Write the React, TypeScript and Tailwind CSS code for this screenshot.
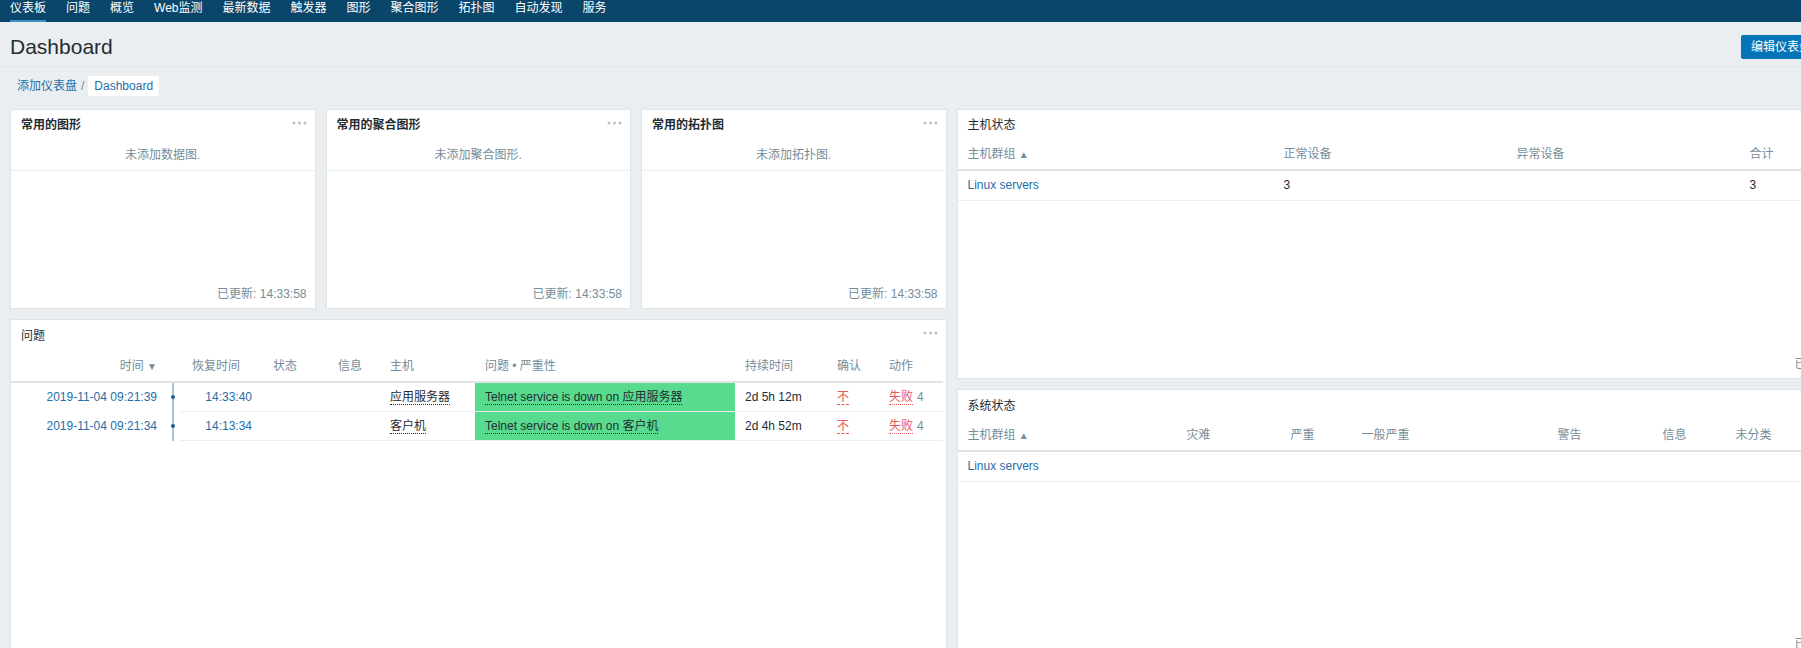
import React from "react";

const NAV = ["仪表板", "问题", "概览", "Web监测", "最新数据", "触发器", "图形", "聚合图形", "拓扑图", "自动发现", "服务"];

function Dots() {
  return (
    <svg width="15" height="4" viewBox="0 0 15 4" className="block">
      <circle cx="2" cy="2" r="1.5" fill="#b7c2c9" />
      <circle cx="7.5" cy="2" r="1.5" fill="#b7c2c9" />
      <circle cx="13" cy="2" r="1.5" fill="#b7c2c9" />
    </svg>
  );
}

function GraphWidget({ title, empty, pos }: { title: string; empty: string; pos: string }) {
  return (
    <div className={`${pos} bg-white border border-[#dfe4e7] flex flex-col`}>
      <div className="h-[30px] flex items-center justify-between pl-[10px] pr-[8px]">
        <span className="font-bold text-[#1f2c33]">{title}</span>
        <span className="-mt-[5px]"><Dots /></span>
      </div>
      <div className="h-[31px] leading-[30px] text-center text-[#768d99] border-b border-[#ebeef0]">{empty}</div>
      <div className="flex-1" />
      <div className="text-right pr-[8px] pb-[7px] leading-[14px] text-[#768d99]">已更新: 14:33:58</div>
    </div>
  );
}

const LINK = "text-[#1f6ea8]";

const problems = [
  { date: "2019-11-04 09:21:39", rec: "14:33:40", host: "应用服务器", prob: "Telnet service is down on 应用服务器", dur: "2d 5h 12m" },
  { date: "2019-11-04 09:21:34", rec: "14:13:34", host: "客户机", prob: "Telnet service is down on 客户机", dur: "2d 4h 52m" },
];

function ProblemsWidget() {
  return (
    <div className="col-start-1 col-span-6 row-start-4 row-span-5 bg-white border border-[#dfe4e7] flex flex-col">
      <div className="h-[31px] flex items-center justify-between pl-[10px] pr-[8px]">
        <span className="text-[#1f2c33]">问题</span>
        <span className="-mt-[5px]"><Dots /></span>
      </div>
      <div className="flex h-[32px] leading-[30px] text-[#768d99] border-b-2 border-[#dfe4e7] mr-[3px]">
        <div className="w-[149px] text-right pr-[3px]">时间 <span className="text-[10px]">▼</span></div>
        <div className="w-[32px]" />
        <div className="w-[81px]">恢复时间</div>
        <div className="w-[65px]">状态</div>
        <div className="w-[52px]">信息</div>
        <div className="w-[95px]">主机</div>
        <div className="w-[260px]">问题 • 严重性</div>
        <div className="w-[92px]">持续时间</div>
        <div className="w-[52px]">确认</div>
        <div>动作</div>
      </div>
      {problems.map((p) => (
        <div key={p.date} className="flex h-[29px]">
          <div className={`w-[149px] text-right pr-[3px] leading-[28px] ${LINK}`}>{p.date}</div>
          <div className="w-[20px] relative">
            <div className="absolute left-[12px] top-0 bottom-0 w-[2px] bg-[#a9c5d8]" />
            <div className="absolute left-[11px] top-[12px] w-[4px] h-[4px] rounded-full bg-[#1f5f8f]" />
          </div>
          <div className="flex-1 flex border-b border-[#ebeef0] mr-[3px]">
            <div className={`w-[82px] text-right pr-[10px] leading-[28px] ${LINK}`}>{p.rec}</div>
            <div className="w-[128px]" />
            <div className="w-[85px] flex items-center">
              <span className="leading-[14px] text-[#1f2c33] border-b border-dotted border-[#1f2c33]">{p.host}</span>
            </div>
            <div className="w-[260px] bg-[#59db8f] flex items-center pl-[10px]">
              <span className="leading-[14px] text-[#1f2c33] border-b border-dotted border-[#1f2c33]">{p.prob}</span>
            </div>
            <div className="w-[102px] pl-[10px] leading-[28px] text-[#1f2c33]">{p.dur}</div>
            <div className="w-[52px] flex items-center">
              <span className="leading-[14px] text-[#e45959] border-b border-dashed border-[#e45959]">不</span>
            </div>
            <div className="flex items-center">
              <span className="leading-[14px] text-[#e45959] border-b border-dotted border-[#e45959]">失败</span>
              <span className="ml-[4px] text-[#768d99]">4</span>
            </div>
          </div>
        </div>
      ))}
    </div>
  );
}

function HostStatusWidget() {
  return (
    <div className="col-start-7 col-span-6 row-start-1 row-span-4 bg-white border border-[#dfe4e7] flex flex-col">
      <div className="h-[30px] flex items-center pl-[10px]">
        <span className="text-[#1f2c33]">主机状态</span>
      </div>
      <div className="flex h-[31px] leading-[29px] text-[#768d99] border-b-2 border-[#dfe4e7] px-[5px]">
        <div className="w-[316px] px-[5px]">主机群组 <span className="text-[10px]">▲</span></div>
        <div className="w-[233px] px-[5px]">正常设备</div>
        <div className="w-[233px] px-[5px]">异常设备</div>
        <div className="flex-1 px-[5px]">合计</div>
      </div>
      <div className="flex h-[30px] leading-[29px] text-[#1f2c33] border-b border-[#ebeef0] px-[5px]">
        <div className={`w-[316px] px-[5px] ${LINK}`}>Linux servers</div>
        <div className="w-[233px] px-[5px]">3</div>
        <div className="w-[233px] px-[5px]" />
        <div className="flex-1 px-[5px]">3</div>
      </div>
      <div className="flex-1" />
      <div className="text-right pr-[8px] pb-[7px] leading-[14px] text-[#768d99]">已更新: 14:33:58</div>
    </div>
  );
}

function SystemStatusWidget() {
  return (
    <div className="col-start-7 col-span-6 row-start-5 row-span-4 bg-white border border-[#dfe4e7] flex flex-col">
      <div className="h-[31px] flex items-center pl-[10px]">
        <span className="text-[#1f2c33]">系统状态</span>
      </div>
      <div className="flex h-[31px] leading-[29px] text-[#768d99] border-b-2 border-[#dfe4e7] px-[5px]">
        <div className="w-[219px] px-[5px]">主机群组 <span className="text-[10px]">▲</span></div>
        <div className="w-[104px] px-[5px]">灾难</div>
        <div className="w-[71px] px-[5px]">严重</div>
        <div className="w-[196px] px-[5px]">一般严重</div>
        <div className="w-[105px] px-[5px]">警告</div>
        <div className="w-[73px] px-[5px]">信息</div>
        <div className="flex-1 px-[5px]">未分类</div>
      </div>
      <div className="flex h-[30px] leading-[29px] border-b border-[#ebeef0] px-[5px]">
        <div className={`px-[5px] ${LINK}`}>Linux servers</div>
      </div>
      <div className="flex-1" />
      <div className="text-right pr-[8px] pb-[7px] leading-[14px] text-[#768d99]">已更新: 14:33:58</div>
    </div>
  );
}

export default function App() {
  return (
    <div className="w-[1801px] h-[648px] overflow-hidden bg-[#ebeef0] text-[12px] font-['Liberation_Sans','Noto_Sans_CJK_SC',sans-serif]">
      <div className="w-[1906px]">
        <nav className="h-[22px] bg-[#0a466a] flex">
          {NAV.map((t, i) => (
            <div key={t} className="px-[10px] h-[22px]">
              <div
                className={
                  i === 0
                    ? "h-[22px] leading-[17px] text-white border-b-2 border-[#3d8fc6]"
                    : "h-[22px] leading-[17px] text-white"
                }
              >
                {t}
              </div>
            </div>
          ))}
        </nav>
        <header className="flex items-center justify-between pt-[13px] pb-[7px] pl-[10px] pr-[10px] border-b border-[#e2e6e9]">
          <h1 className="text-[21px] leading-[24px] text-[#1f2c33]">Dashboard</h1>
          <div className="flex items-center gap-[10px] w-[155px]">
            <button className="h-[24px] px-[10px] bg-[#0275b8] text-white rounded-[2px] whitespace-nowrap">编辑仪表盘</button>
            <button className="h-[24px] w-[24px] bg-[#0275b8] rounded-[2px]" />
            <button className="h-[24px] w-[24px] bg-white border border-[#cfd6db] rounded-[2px]" />
          </div>
        </header>
        <div className="flex items-center h-[20px] mt-[9px] pl-[17px]">
          <span className={LINK}>添加仪表盘</span>
          <span className="mx-[4px] text-[#768d99]">/</span>
          <span className={`bg-white h-[20px] leading-[20px] px-[6px] ${LINK}`}>Dashboard</span>
        </div>
        <div className="grid grid-cols-[repeat(12,147.75px)] grid-rows-[repeat(8,60px)] gap-[10px] pl-[10px] mt-[13px]">
          <GraphWidget pos="col-start-1 col-span-2 row-start-1 row-span-3" title="常用的图形" empty="未添加数据图." />
          <GraphWidget pos="col-start-3 col-span-2 row-start-1 row-span-3" title="常用的聚合图形" empty="未添加聚合图形." />
          <GraphWidget pos="col-start-5 col-span-2 row-start-1 row-span-3" title="常用的拓扑图" empty="未添加拓扑图." />
          <HostStatusWidget />
          <ProblemsWidget />
          <SystemStatusWidget />
        </div>
      </div>
    </div>
  );
}
